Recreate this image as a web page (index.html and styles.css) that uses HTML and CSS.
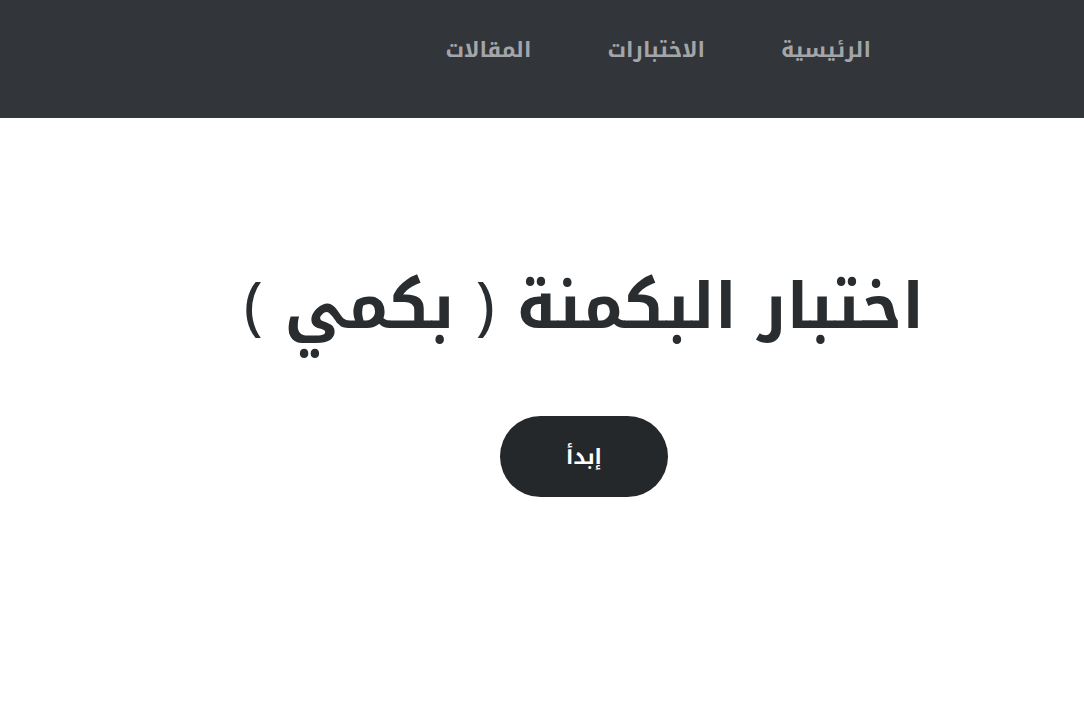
FILE: index.html
```html
<!DOCTYPE html>
<html lang="ar" dir="rtl">
<head>
<meta charset="utf-8">
<title>اختبار البكمنة</title>
<link rel="stylesheet" href="styles.css">
</head>
<body>
<header class="topbar">
  <nav class="nav">
    <a class="nav-link" href="#">الرئيسية</a>
    <a class="nav-link" href="#">الاختبارات</a>
    <a class="nav-link" href="#">المقالات</a>
  </nav>
</header>
<main class="hero">
  <h1 class="hero-title">اختبار البكمنة <span class="paren">(</span> بكمي <span class="paren">)</span></h1>
  <a class="start-btn" href="#">إبدأ</a>
</main>
</body>
</html>
```
FILE: styles.css
```css
* { box-sizing: border-box; }
html, body { margin: 0; padding: 0; }
body {
  font-family: "Noto Kufi Arabic", "Droid Arabic Kufi", "DejaVu Sans", sans-serif;
  background: #ffffff;
  color: #2a2d30;
  direction: rtl;
}
.topbar {
  height: 118px;
  background: #323539;
  display: flex;
  align-items: center;
  padding-right: 213px;
}
.nav {
  display: flex;
  gap: 76px;
  padding-bottom: 20px;
}
.nav-link {
  color: #a3a5a8;
  text-decoration: none;
  font-weight: bold;
  font-size: 21.5px;
}
.hero {
  display: flex;
  flex-direction: column;
  align-items: center;
  padding-left: 84px;
  padding-top: 129px;
}
.hero-title {
  margin: 0;
  font-size: 63.5px;
  font-weight: bold;
  color: #2a2d30;
}
.paren {
  font-weight: normal;
}
.start-btn {
  margin-top: 49px;
  width: 168px;
  height: 81px;
  border-radius: 41px;
  background: #25282b;
  color: #ffffff;
  text-decoration: none;
  font-weight: bold;
  font-size: 21px;
  display: flex;
  align-items: center;
  justify-content: center;
}
```
